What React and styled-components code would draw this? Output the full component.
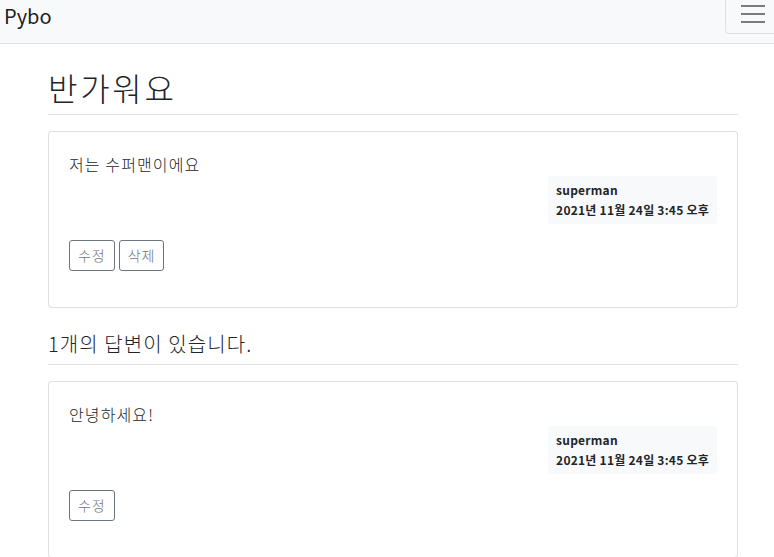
import React from 'react';
import styled, { createGlobalStyle } from 'styled-components';

const GlobalStyle = createGlobalStyle`
body {
  margin: 0;
  font-family: "Noto Sans CJK KR", "Noto Sans", sans-serif;
  font-size: 16px;
  line-height: 1.5;
  color: #212529;
  background: #fff;
}
`
const Navbar = styled.nav`
display: flex;
justify-content: space-between;
align-items: flex-start;
height: 43px;
padding-left: 4px;
background-color: #f8f9fa;
border-bottom: 1px solid #dee2e6;
overflow: hidden;
`
const Brand = styled.a`
margin-top: 1px;
font-size: 20px;
line-height: 30px;
color: rgba(0, 0, 0, 0.9);
text-decoration: none;
`
const Toggler = styled.button`
display: flex;
flex-direction: column;
justify-content: center;
gap: 6px;
width: 56px;
height: 40px;
margin-top: -6px;
margin-right: -7px;
padding: 0 12px 0 15px;
background: transparent;
border: 1px solid rgba(0, 0, 0, 0.1);
border-radius: 4px;
`
const Bar = styled.span`
display: block;
width: 24px;
height: 2px;
background-color: rgba(0, 0, 0, 0.5);
`
const Container = styled.main`
margin: 16px 0;
padding: 0 36px 0 48px;
`
const Title = styled.h2`
margin: 0 0 8px;
padding: 8px 0;
font-size: 32px;
font-weight: 300;
line-height: 1.2;
letter-spacing: 0.085em;
border-bottom: 1px solid #dee2e6;
`
const SubTitle = styled.h5`
margin: 16px 0;
padding: 8px 0;
font-size: 20px;
font-weight: 300;
line-height: 1.2;
letter-spacing: 0.055em;
border-bottom: 1px solid #dee2e6;
`
const Card = styled.div`
margin: 16px 0;
border: 1px solid rgba(0, 0, 0, 0.125);
border-radius: 4px;
background: #fff;
`
const CardBody = styled.div`
padding: 20px;
`
const CardText = styled.div`
white-space: pre-line;
font-weight: 300;
letter-spacing: 0.07em;
`
const MetaRow = styled.div`
display: flex;
justify-content: flex-end;
`
const Badge = styled.div`
padding: 8px;
font-size: 12px;
font-weight: 700;
line-height: 1;
letter-spacing: 0.02em;
text-align: left;
color: #212529;
background-color: #f8f9fa;
border-radius: 4px;
`
const MetaLine = styled.div`
margin-bottom: ${p => (p.last ? '0' : '8px')};
`
const Actions = styled.div`
display: flex;
gap: 4px;
margin: 16px 0;
`
const Button = styled.button`
padding: 4px 8px;
font-family: inherit;
font-size: 14px;
font-weight: 300;
line-height: 21px;
letter-spacing: 0.07em;
color: #6c757d;
background: transparent;
border: 1px solid #6c757d;
border-radius: 3px;
`

const Post = ({ text, author, date, canDelete }) => (
  <Card>
    <CardBody>
      <CardText>{text}</CardText>
      <MetaRow>
        <Badge>
          <MetaLine>{author}</MetaLine>
          <MetaLine last>{date}</MetaLine>
        </Badge>
      </MetaRow>
      <Actions>
        <Button>수정</Button>
        {canDelete && <Button>삭제</Button>}
      </Actions>
    </CardBody>
  </Card>
)

const App = () => {
  return (
    <>
      <GlobalStyle />
      <Navbar>
        <Brand href="#">Pybo</Brand>
        <Toggler aria-label="menu">
          <Bar />
          <Bar />
          <Bar />
        </Toggler>
      </Navbar>
      <Container>
        <Title>반가워요</Title>
        <Post text="저는 수퍼맨이에요" author="superman" date="2021년 11월 24일 3:45 오후" canDelete />
        <SubTitle>1개의 답변이 있습니다.</SubTitle>
        <Post text="안녕하세요!" author="superman" date="2021년 11월 24일 3:45 오후" />
      </Container>
    </>
  )
}

export default App
